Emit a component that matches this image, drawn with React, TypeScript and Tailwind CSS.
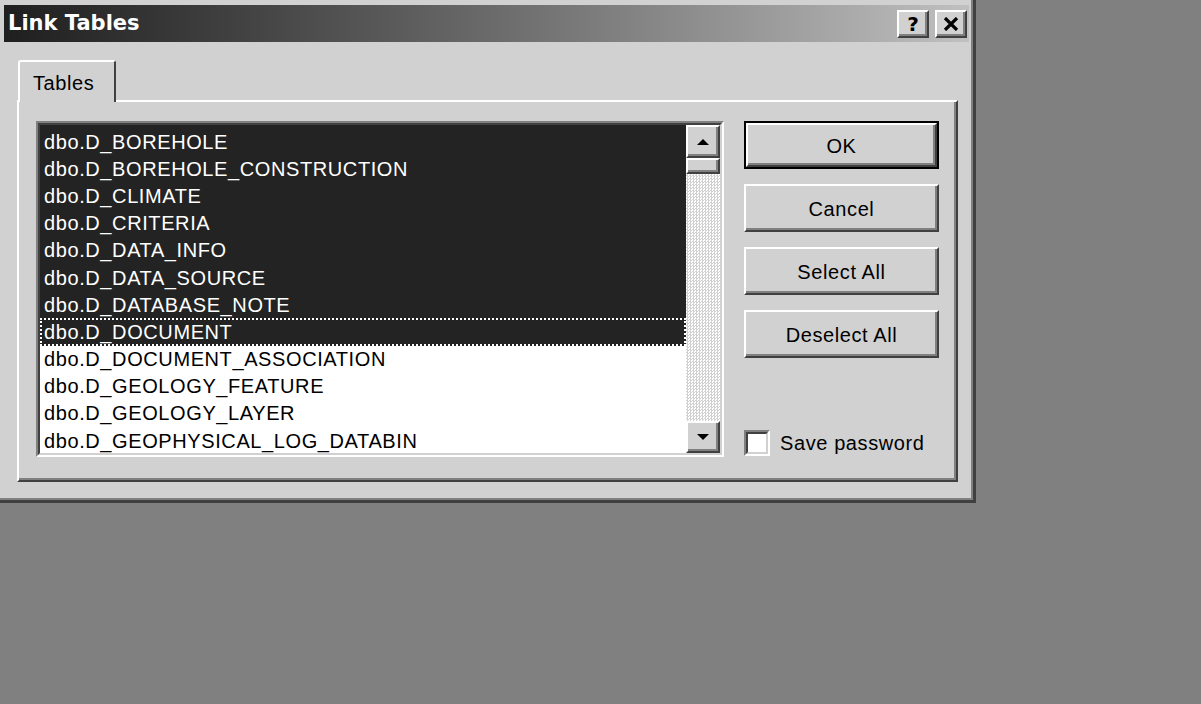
import React from "react";

// Win2000-style "Link Tables" dialog, scaled up and in greyscale.

const tables = [
  "dbo.D_BOREHOLE",
  "dbo.D_BOREHOLE_CONSTRUCTION",
  "dbo.D_CLIMATE",
  "dbo.D_CRITERIA",
  "dbo.D_DATA_INFO",
  "dbo.D_DATA_SOURCE",
  "dbo.D_DATABASE_NOTE",
  "dbo.D_DOCUMENT",
  "dbo.D_DOCUMENT_ASSOCIATION",
  "dbo.D_GEOLOGY_FEATURE",
  "dbo.D_GEOLOGY_LAYER",
  "dbo.D_GEOPHYSICAL_LOG_DATABIN",
];

const SELECTED = 8;
const FOCUSED = 7;

function Raised({ className = "", children }: { className?: string; children?: React.ReactNode }) {
  return (
    <div
      className={
        "border-2 border-t-white border-l-white border-r-[#404040] border-b-[#404040] bg-[#d1d1d1] shadow-[inset_-2px_-2px_0_#808080] " +
        className
      }
    >
      {children}
    </div>
  );
}

function Button({ label, isDefault }: { label: string; isDefault?: boolean }) {
  const body = (
    <Raised className="flex h-full w-full items-center justify-center pt-[1px]">
      <span className="text-[20px] tracking-[0.6px] text-black">{label}</span>
    </Raised>
  );
  return isDefault ? (
    <div className="h-[48px] w-[195px] border-2 border-black">{body}</div>
  ) : (
    <div className="h-[48px] w-[195px]">{body}</div>
  );
}

function Arrow({ down }: { down?: boolean }) {
  return (
    <svg width="14" height="8" viewBox="0 0 14 8">
      {down ? <polygon points="1,1 13,1 7,7" fill="#000" /> : <polygon points="7,1 13,7 1,7" fill="#000" />}
    </svg>
  );
}

function ListBox() {
  return (
    <div className="h-[336px] w-[688px] border-2 border-t-[#808080] border-l-[#808080] border-r-white border-b-white">
      <div className="flex h-full w-full border-2 border-t-[#404040] border-l-[#404040] border-r-[#d1d1d1] border-b-[#d1d1d1] bg-white">
        <div className="flex-1 overflow-hidden">
          {tables.map((t, i) => {
            const sel = i < SELECTED;
            return (
              <div
                key={t}
                className={
                  "flex items-center whitespace-nowrap pl-[4px] text-[20px] tracking-[0.6px] " +
                  (i === 0 ? "h-[30.2px] pt-[3px] " : "h-[27.2px] ") +
                  (sel ? "bg-[#232323] text-white " : "text-black ") +
                  (i === FOCUSED ? "outline-2 outline-dotted outline-offset-[-2px] outline-white" : "")
                }
              >
                {t}
              </div>
            );
          })}
        </div>
        <div className="flex w-[34px] flex-col bg-[repeating-conic-gradient(#d1d1d1_0%_25%,#ffffff_0%_50%)] bg-[length:3px_3px]">
          <Raised className="flex h-[33px] items-center justify-center">
            <Arrow />
          </Raised>
          <Raised className="h-[16px]" />
          <div className="flex-1" />
          <Raised className="flex h-[32px] items-center justify-center">
            <Arrow down />
          </Raised>
        </div>
      </div>
    </div>
  );
}

export default function App() {
  return (
    <div className="h-[704px] w-full bg-[#808080] font-['Liberation_Sans',Arial,sans-serif]">
      <div className="flex h-[503px] w-[976px] flex-col border-r-[3px] border-b-[3px] border-[#404040] bg-[#d1d1d1] px-[4px] pt-[5px] shadow-[inset_-2px_-2px_0_#808080]">
        {/* title bar */}
        <div className="flex h-[37px] items-center justify-between bg-gradient-to-r from-[#1f1f1f] to-[#c0c0c0] pl-[4px] pr-[2px]">
          <span className="font-['DejaVu_Sans',sans-serif] text-[21px] font-bold text-white">Link Tables</span>
          <div className="flex gap-[6px]">
            <Raised className="flex h-[28px] w-[32px] items-center justify-center">
              <span className="font-['DejaVu_Sans',sans-serif] text-[20px] leading-none font-bold text-black">?</span>
            </Raised>
            <Raised className="flex h-[28px] w-[32px] items-center justify-center">
              <svg width="16" height="14" viewBox="0 0 16 14">
                <path d="M2 1 L14 13 M14 1 L2 13" stroke="#000" strokeWidth="3.2" />
              </svg>
            </Raised>
          </div>
        </div>

        {/* tab strip */}
        <div className="ml-[14px] mt-[18px] flex">
          <div className="relative z-10 -mb-[2px] flex h-[42px] w-[98px] items-center rounded-t-[3px] border-2 border-b-0 border-t-white border-l-white border-r-[#404040] bg-[#d1d1d1] pl-[13px] pt-[1px]">
            <span className="text-[20px] tracking-[0.6px] text-black">Tables</span>
          </div>
        </div>

        {/* tab panel */}
        <div className="ml-[13px] flex h-[382px] w-[941px] gap-[20px] border-2 border-t-white border-l-white border-r-[#404040] border-b-[#404040] pl-[17px] pt-[19px] shadow-[inset_-2px_-2px_0_#808080]">
          <ListBox />
          <div className="flex h-[336px] flex-col gap-[15px]">
            <Button label="OK" isDefault />
            <Button label="Cancel" />
            <Button label="Select All" />
            <Button label="Deselect All" />
            <div className="mt-auto flex h-[26px] items-center gap-[10px] mb-[1px]">
              <div className="h-[26px] w-[26px] border-2 border-t-[#808080] border-l-[#808080] border-r-white border-b-white">
                <div className="h-full w-full border-2 border-t-[#404040] border-l-[#404040] border-r-[#d1d1d1] border-b-[#d1d1d1] bg-white" />
              </div>
              <span className="text-[20px] leading-[26px] tracking-[0.6px] text-black">Save password</span>
            </div>
          </div>
        </div>
      </div>
    </div>
  );
}
